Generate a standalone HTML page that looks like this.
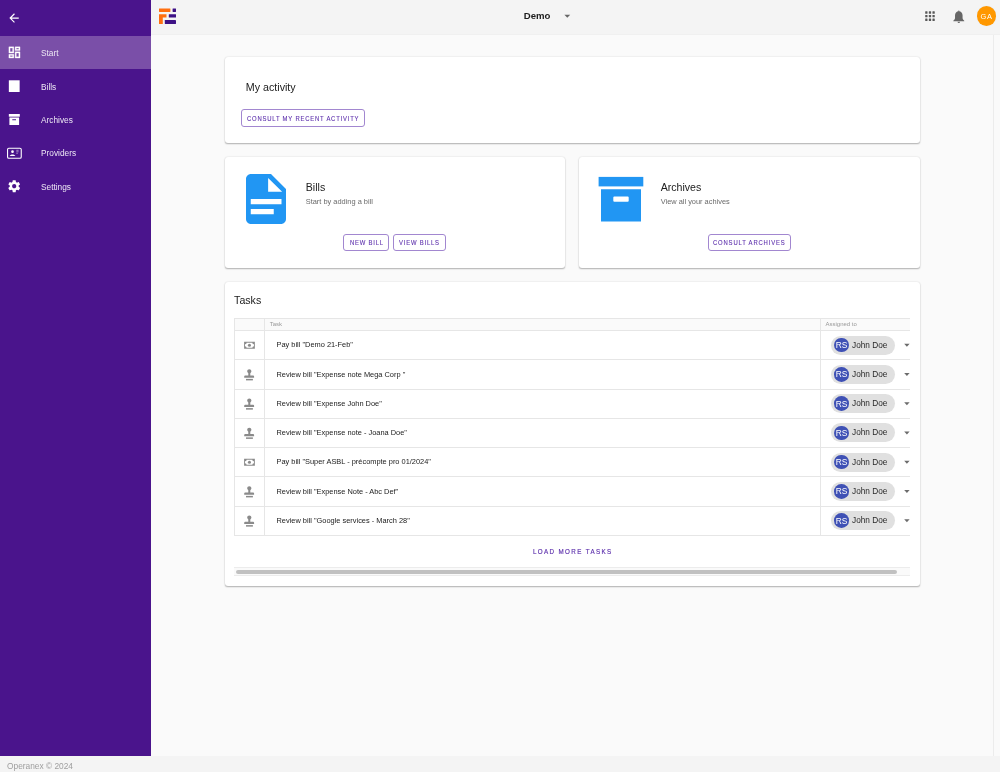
<!DOCTYPE html>
<html><head><meta charset="utf-8">
<style>
*{box-sizing:border-box;margin:0;padding:0}
html,body{width:1000px;height:772px;overflow:hidden;background:#fafafa;font-family:"Liberation Sans",sans-serif;color:#212121}
svg{position:absolute;overflow:visible}
.t{position:absolute;white-space:nowrap;line-height:1}
#side{position:absolute;left:0;top:0;width:150.5px;height:756px;background:#4a148c}
#side .active{position:absolute;left:0;top:35.5px;width:150.5px;height:33.7px;background:#7a4fa8}
#side .t{left:41px;font-size:8.3px;color:#ede7f4}
#hdr{position:absolute;left:150.5px;top:0;width:849.5px;height:35px;background:#f4f4f4;border-bottom:1px solid #f0f0f0}
#foot{position:absolute;left:0;top:756px;width:1000px;height:16px;background:#f4f4f4}
.card{position:absolute;background:#fff;border-radius:3px;box-shadow:0 1.3px 1.6px -0.4px rgba(0,0,0,.2),0 0.7px 1.6px 0 rgba(0,0,0,.1),0 0 2.5px rgba(0,0,0,.05)}
.btn{position:absolute;border:1.15px solid #a287d0;border-radius:3px}
.btxt{position:absolute;white-space:nowrap;line-height:1;color:#5f33ad;font-weight:normal;font-size:7.4px;letter-spacing:.65px;-webkit-text-stroke:.12px #5f33ad;transform-origin:0 0;transform:scaleX(.8)}
.title{font-size:10.6px;color:#212121}
.sub{font-size:7.42px;color:#6b6b6b}
.hl{position:absolute;height:1px;background:#e6e6e6}
.vl{position:absolute;width:1px;background:#e6e6e6}
.task{font-size:7.42px;color:#222}
.chip{position:absolute;left:830.6px;width:64.4px;height:19.2px;border-radius:9.6px;background:#e0e0e0}
.av{position:absolute;left:834px;width:14.6px;height:14.6px;border-radius:50%;background:#3f51b5}
.avt{font-size:8.4px;color:#fff}
.jd{font-size:8.27px;color:#2a2a2a}
</style></head><body>
<div id="root" style="position:absolute;left:0;top:0;width:1000px;height:772px;background:#fafafa;will-change:transform">

<div id="side">
  <svg style="left:7.25px;top:11.45px" width="14.1" height="14.1" viewBox="0 0 24 24"><path d="M20 11H7.83l5.59-5.59L12 4l-8 8 8 8 1.41-1.41L7.83 13H20v-2z" fill="#fff"/></svg>
  <div class="active"></div>
  <!-- dashboard -->
  <svg style="left:6.83px;top:44.93px" width="14.93" height="14.93" viewBox="0 0 24 24"><path fill="#fff" stroke="#fff" stroke-width=".45" d="M19 5v2h-4V5h4M9 5v6H5V5h4m10 8v6h-4v-6h4M9 17v2H5v-2h4M21 3h-8v6h8V3zM11 3H3v10h8V3zm10 8h-8v10h8V11zm-10 4H3v6h8v-6z"/></svg>
  <div class="t" style="top:49px">Start</div>
  <!-- bills -->
  <svg style="left:0;top:0" width="151" height="200"><rect x="8.84" y="80.3" width="10.8" height="11.7" fill="#fff"/></svg>
  <div class="t" style="top:82.5px">Bills</div>
  <!-- archives -->
  <svg style="left:0;top:0" width="151" height="200"><rect x="8.84" y="114" width="10.96" height="2.7" fill="#fff"/><path fill="#fff" fill-rule="evenodd" d="M9.4 117.4h9.7v7.7h-9.7z M12.3 119.25h3.7v1h-3.7z"/></svg>
  <div class="t" style="top:115.8px">Archives</div>
  <!-- providers -->
  <svg style="left:0;top:0" width="151" height="200"><rect x="7.55" y="148.25" width="13.7" height="10" rx="1.3" fill="none" stroke="#fff" stroke-width="1.1"/><circle cx="12.5" cy="151.7" r="1.35" fill="#fff"/><path d="M9.6 156.1c0.4-1.2 1.6-1.7 2.9-1.7s2.5 0.5 2.9 1.7z" fill="#fff"/><path d="M16.3 150.3h2.3M16.3 151.8h2.3M16.3 153.3h1.5" stroke="#fff" stroke-opacity=".55" stroke-width=".9"/></svg>
  <div class="t" style="top:148.9px">Providers</div>
  <!-- settings -->
  <svg style="left:7.1px;top:179.3px" width="14.4" height="14.4" viewBox="0 0 24 24"><path fill="#fff" d="M19.43 12.98c.04-.32.07-.64.07-.98s-.03-.66-.07-.98l2.11-1.650c.19-.15.24-.42.12-.64l-2-3.46c-.12-.22-.39-.3-.61-.22l-2.49 1c-.52-.4-1.08-.73-1.69-.98l-.38-2.65C14.46 2.18 14.25 2 14 2h-4c-.25 0-.46.18-.49.42l-.38 2.65c-.61.25-1.170.59-1.69.98l-2.49-1c-.23-.09-.49 0-.61.22l-2 3.46c-.13.22-.07.49.12.64l2.11 1.65c-.04.32-.07.65-.07.98s.03.66.07.98l-2.11 1.65c-.19.15-.24.42-.12.64l2 3.46c.12.22.39.3.61.22l2.49-1c.52.4 1.08.73 1.69.98l.38 2.65c.03.24.24.42.49.42h4c.25 0 .46-.18.49-.42l.38-2.65c.61-.25 1.17-.59 1.69-.98l2.49 1c.23.09.49 0 .61-.22l2-3.46c.12-.22.07-.49-.12-.64l-2.11-1.65zM12 15.5c-1.93 0-3.5-1.57-3.5-3.5s1.57-3.5 3.5-3.5 3.5 1.57 3.5 3.5-1.57 3.5-3.5 3.5z"/></svg>
  <div class="t" style="top:182.5px">Settings</div>
</div>

<div id="hdr"></div>
<!-- logo -->
<svg style="left:0;top:0" width="200" height="30">
  <rect x="159" y="8.4" width="11.4" height="3.6" rx=".4" fill="#ff6f0f"/>
  <rect x="172.6" y="8.4" width="3.4" height="3.6" rx=".4" fill="#3d1185"/>
  <path d="M159 14.2h7.5v3.4h-3.7v6.4h-3.8z" fill="#ff6f0f"/>
  <rect x="168.8" y="14.2" width="7.2" height="3.4" rx=".4" fill="#3d1185"/>
  <rect x="164.8" y="20" width="11.2" height="4" rx=".4" fill="#3d1185"/>
</svg>
<div class="t" style="left:523.8px;top:10.9px;font-size:9.6px;font-weight:bold;color:#1d1d1d">Demo</div>
<svg style="left:0;top:0" width="1000" height="30">
  <path d="M564.4 14.7h5.8l-2.9 3z" fill="#666"/>
  <g fill="#585858"><rect x="925.20" y="11.33" width="2.3" height="2.3" rx=".5"/><rect x="928.83" y="11.33" width="2.3" height="2.3" rx=".5"/><rect x="932.46" y="11.33" width="2.3" height="2.3" rx=".5"/><rect x="925.20" y="14.96" width="2.3" height="2.3" rx=".5"/><rect x="928.83" y="14.96" width="2.3" height="2.3" rx=".5"/><rect x="932.46" y="14.96" width="2.3" height="2.3" rx=".5"/><rect x="925.20" y="18.59" width="2.3" height="2.3" rx=".5"/><rect x="928.83" y="18.59" width="2.3" height="2.3" rx=".5"/><rect x="932.46" y="18.59" width="2.3" height="2.3" rx=".5"/></g>
</svg>
<svg style="left:950.8px;top:8.5px" width="15.6" height="15.6" viewBox="0 0 24 24"><g fill="#666"><circle cx="12" cy="3.3" r="1.1"/><path d="M12 3.4C8.4 3.4 6.2 6.1 6.2 9.8V13.5C6.2 15.6 5.1 16.9 3.6 17.9V18.9H20.4V17.9C18.9 16.9 17.8 15.6 17.8 13.5V9.8C17.8 6.1 15.6 3.4 12 3.4Z"/><path d="M10.1 19.6H13.9A1.9 1.9 0 0 1 10.1 19.6Z"/></g></svg>
<div style="position:absolute;left:976.6px;top:6.4px;width:19.4px;height:19.4px;border-radius:50%;background:#ff9800;box-shadow:0 0 0 1px #eef3f8"></div>
<div class="t" style="left:980.6px;top:12.5px;font-size:7.4px;color:#fff;letter-spacing:.6px">GA</div>

<!-- scrollbar edge -->
<div style="position:absolute;left:992.5px;top:35px;width:1px;height:721px;background:#ececec"></div>

<div id="foot"><div class="t" style="left:7px;top:5.5px;font-size:8.35px;color:#9e9e9e">Operanex © 2024</div></div>

<!-- card 1 -->
<div class="card" style="left:224.5px;top:56.7px;width:695.7px;height:86.3px"></div>
<div class="t title" style="left:245.8px;top:81.8px;font-size:10.7px">My activity</div>
<div class="btn" style="left:241.2px;top:109.1px;width:123.6px;height:17.8px"></div>
<div class="btxt" style="left:247.3px;top:114.9px;letter-spacing:.98px">CONSULT MY RECENT ACTIVITY</div>

<!-- card 2 -->
<div class="card" style="left:224.5px;top:157.3px;width:340.5px;height:110.3px"></div>
<svg style="left:236px;top:169px" width="60" height="60" viewBox="0 0 24 24"><path fill="#2196f3" fill-rule="evenodd" d="M6 2h8l6 6v12c0 1.1-.9 2-2 2H6c-1.1 0-2-.9-2-2V4c0-1.1.9-2 2-2z M12.85 3.6v5.5h5.6z M5.9 12h12.3v2.05H5.9z M5.9 16h9.2v2.05H5.9z"/></svg>
<div class="t title" style="left:305.75px;top:182.3px">Bills</div>
<div class="t sub" style="left:305.75px;top:197.9px">Start by adding a bill</div>
<div class="btn" style="left:343.25px;top:233.9px;width:45.5px;height:17.1px"></div>
<div class="btxt" style="left:349.7px;top:239.4px;letter-spacing:.96px">NEW BILL</div>
<div class="btn" style="left:393.25px;top:233.9px;width:52.5px;height:17.1px"></div>
<div class="btxt" style="left:399.3px;top:239.4px;letter-spacing:.99px">VIEW BILLS</div>

<!-- card 3 -->
<div class="card" style="left:579px;top:157.3px;width:341.2px;height:110.3px"></div>
<svg style="left:0;top:0" width="1000" height="300">
  <rect x="598.6" y="176.9" width="44.7" height="9.5" fill="#2196f3"/>
  <path fill="#2196f3" fill-rule="evenodd" d="M601 189.2h40v32.3h-40z M614.3 196.4h13.4a1 1 0 0 1 1 1v3.3a1 1 0 0 1-1 1h-13.4a1 1 0 0 1-1-1v-3.3a1 1 0 0 1 1-1z"/>
</svg>
<div class="t title" style="left:660.7px;top:182.4px">Archives</div>
<div class="t sub" style="left:660.7px;top:197.6px">View all your achives</div>
<div class="btn" style="left:707.5px;top:233.9px;width:83.2px;height:17.1px"></div>
<div class="btxt" style="left:713.2px;top:239.3px;letter-spacing:1.03px">CONSULT ARCHIVES</div>

<!-- card 4 tasks -->
<div class="card" style="left:224.5px;top:282.2px;width:695.7px;height:304.2px"></div>
<div class="t title" style="left:234.1px;top:294.6px">Tasks</div>

<div style="position:absolute;left:234.3px;top:318.4px;width:675.8px;height:12.1px;background:#fafafa"></div>
<div class="t" style="left:269.7px;top:322.4px;font-size:5.97px;color:#999">Task</div>
<div class="t" style="left:825.6px;top:322.4px;font-size:5.97px;color:#999">Assigned to</div>
<!--ROWS-->
<div class="hl" style="left:234.3px;top:318px;width:675.8px"></div>
<div class="hl" style="left:234.3px;top:330.00px;width:675.8px"></div>
<div class="hl" style="left:234.3px;top:359.25px;width:675.8px"></div>
<div class="hl" style="left:234.3px;top:388.50px;width:675.8px"></div>
<div class="hl" style="left:234.3px;top:417.75px;width:675.8px"></div>
<div class="hl" style="left:234.3px;top:447.00px;width:675.8px"></div>
<div class="hl" style="left:234.3px;top:476.25px;width:675.8px"></div>
<div class="hl" style="left:234.3px;top:505.50px;width:675.8px"></div>
<div class="hl" style="left:234.3px;top:534.75px;width:675.8px"></div>
<div class="vl" style="left:234.0px;top:318px;height:217.25px"></div>
<div class="vl" style="left:264.0px;top:318px;height:217.25px"></div>
<div class="vl" style="left:820.0px;top:318px;height:217.25px"></div>
<svg style="left:0;top:0" width="1000" height="600"><g transform="translate(0,345.12)"><path fill-rule="evenodd" fill="#8a8a8a" d="M244.1 -3.3h10.75v6.9h-10.75z M246.6 -2.4h5.75a1.6 1.6 0 0 0 1.6 1.6v1.9a1.6 1.6 0 0 0-1.6 1.6h-5.75a1.6 1.6 0 0 0-1.6-1.6v-1.9a1.6 1.6 0 0 0 1.6-1.6z"/><circle cx="249.45" cy="0.15" r="1.55" fill="#8a8a8a"/></g></svg>
<div class="t task" style="left:276.5px;top:341.32px">Pay bill "Demo 21-Feb"</div>
<div class="chip" style="top:335.52px"></div>
<div class="av" style="top:337.82px"></div>
<div class="t avt" style="left:835.7px;top:341.02px">RS</div>
<div class="t jd" style="left:852px;top:341.73px">John Doe</div>
<svg style="left:0;top:0" width="1000" height="600"><path d="M904.2 343.82h5.4l-2.7 3z" fill="#6b6b6b"/></svg>
<svg style="left:0;top:0" width="1000" height="600"><g transform="translate(0,374.38)" fill="#8a8a8a"><path d="M249.3 -5.1C250.5 -5.1 251.4 -4.2 251.4 -3.1C251.4 -2.2 250.9 -1.7 250.3 -1.2L250.3 1.2L253.1 1.2Q254.1 1.2 254.1 2.2L254.1 3.3L244.2 3.3L244.2 2.2Q244.2 1.2 245.2 1.2L248.3 1.2L248.3 -1.2C247.7 -1.7 247.2 -2.2 247.2 -3.1C247.2 -4.2 248.1 -5.1 249.3 -5.1Z"/><rect x="246" y="4.5" width="6.9" height="1.5"/></g></svg>
<div class="t task" style="left:276.5px;top:370.57px">Review bill "Expense note Mega Corp "</div>
<div class="chip" style="top:364.77px"></div>
<div class="av" style="top:367.07px"></div>
<div class="t avt" style="left:835.7px;top:370.27px">RS</div>
<div class="t jd" style="left:852px;top:370.98px">John Doe</div>
<svg style="left:0;top:0" width="1000" height="600"><path d="M904.2 373.07h5.4l-2.7 3z" fill="#6b6b6b"/></svg>
<svg style="left:0;top:0" width="1000" height="600"><g transform="translate(0,403.62)" fill="#8a8a8a"><path d="M249.3 -5.1C250.5 -5.1 251.4 -4.2 251.4 -3.1C251.4 -2.2 250.9 -1.7 250.3 -1.2L250.3 1.2L253.1 1.2Q254.1 1.2 254.1 2.2L254.1 3.3L244.2 3.3L244.2 2.2Q244.2 1.2 245.2 1.2L248.3 1.2L248.3 -1.2C247.7 -1.7 247.2 -2.2 247.2 -3.1C247.2 -4.2 248.1 -5.1 249.3 -5.1Z"/><rect x="246" y="4.5" width="6.9" height="1.5"/></g></svg>
<div class="t task" style="left:276.5px;top:399.82px">Review bill "Expense John Doe"</div>
<div class="chip" style="top:394.02px"></div>
<div class="av" style="top:396.32px"></div>
<div class="t avt" style="left:835.7px;top:399.52px">RS</div>
<div class="t jd" style="left:852px;top:400.23px">John Doe</div>
<svg style="left:0;top:0" width="1000" height="600"><path d="M904.2 402.32h5.4l-2.7 3z" fill="#6b6b6b"/></svg>
<svg style="left:0;top:0" width="1000" height="600"><g transform="translate(0,432.88)" fill="#8a8a8a"><path d="M249.3 -5.1C250.5 -5.1 251.4 -4.2 251.4 -3.1C251.4 -2.2 250.9 -1.7 250.3 -1.2L250.3 1.2L253.1 1.2Q254.1 1.2 254.1 2.2L254.1 3.3L244.2 3.3L244.2 2.2Q244.2 1.2 245.2 1.2L248.3 1.2L248.3 -1.2C247.7 -1.7 247.2 -2.2 247.2 -3.1C247.2 -4.2 248.1 -5.1 249.3 -5.1Z"/><rect x="246" y="4.5" width="6.9" height="1.5"/></g></svg>
<div class="t task" style="left:276.5px;top:429.07px">Review bill "Expense note - Joana Doe"</div>
<div class="chip" style="top:423.27px"></div>
<div class="av" style="top:425.57px"></div>
<div class="t avt" style="left:835.7px;top:428.77px">RS</div>
<div class="t jd" style="left:852px;top:429.48px">John Doe</div>
<svg style="left:0;top:0" width="1000" height="600"><path d="M904.2 431.57h5.4l-2.7 3z" fill="#6b6b6b"/></svg>
<svg style="left:0;top:0" width="1000" height="600"><g transform="translate(0,462.12)"><path fill-rule="evenodd" fill="#8a8a8a" d="M244.1 -3.3h10.75v6.9h-10.75z M246.6 -2.4h5.75a1.6 1.6 0 0 0 1.6 1.6v1.9a1.6 1.6 0 0 0-1.6 1.6h-5.75a1.6 1.6 0 0 0-1.6-1.6v-1.9a1.6 1.6 0 0 0 1.6-1.6z"/><circle cx="249.45" cy="0.15" r="1.55" fill="#8a8a8a"/></g></svg>
<div class="t task" style="left:276.5px;top:458.32px">Pay bill "Super ASBL - précompte pro 01/2024"</div>
<div class="chip" style="top:452.52px"></div>
<div class="av" style="top:454.82px"></div>
<div class="t avt" style="left:835.7px;top:458.02px">RS</div>
<div class="t jd" style="left:852px;top:458.73px">John Doe</div>
<svg style="left:0;top:0" width="1000" height="600"><path d="M904.2 460.82h5.4l-2.7 3z" fill="#6b6b6b"/></svg>
<svg style="left:0;top:0" width="1000" height="600"><g transform="translate(0,491.38)" fill="#8a8a8a"><path d="M249.3 -5.1C250.5 -5.1 251.4 -4.2 251.4 -3.1C251.4 -2.2 250.9 -1.7 250.3 -1.2L250.3 1.2L253.1 1.2Q254.1 1.2 254.1 2.2L254.1 3.3L244.2 3.3L244.2 2.2Q244.2 1.2 245.2 1.2L248.3 1.2L248.3 -1.2C247.7 -1.7 247.2 -2.2 247.2 -3.1C247.2 -4.2 248.1 -5.1 249.3 -5.1Z"/><rect x="246" y="4.5" width="6.9" height="1.5"/></g></svg>
<div class="t task" style="left:276.5px;top:487.57px">Review bill "Expense Note - Abc Def"</div>
<div class="chip" style="top:481.77px"></div>
<div class="av" style="top:484.07px"></div>
<div class="t avt" style="left:835.7px;top:487.27px">RS</div>
<div class="t jd" style="left:852px;top:487.98px">John Doe</div>
<svg style="left:0;top:0" width="1000" height="600"><path d="M904.2 490.07h5.4l-2.7 3z" fill="#6b6b6b"/></svg>
<svg style="left:0;top:0" width="1000" height="600"><g transform="translate(0,520.62)" fill="#8a8a8a"><path d="M249.3 -5.1C250.5 -5.1 251.4 -4.2 251.4 -3.1C251.4 -2.2 250.9 -1.7 250.3 -1.2L250.3 1.2L253.1 1.2Q254.1 1.2 254.1 2.2L254.1 3.3L244.2 3.3L244.2 2.2Q244.2 1.2 245.2 1.2L248.3 1.2L248.3 -1.2C247.7 -1.7 247.2 -2.2 247.2 -3.1C247.2 -4.2 248.1 -5.1 249.3 -5.1Z"/><rect x="246" y="4.5" width="6.9" height="1.5"/></g></svg>
<div class="t task" style="left:276.5px;top:516.83px">Review bill "Google services - March 28"</div>
<div class="chip" style="top:511.02px"></div>
<div class="av" style="top:513.33px"></div>
<div class="t avt" style="left:835.7px;top:516.52px">RS</div>
<div class="t jd" style="left:852px;top:517.23px">John Doe</div>
<svg style="left:0;top:0" width="1000" height="600"><path d="M904.2 519.33h5.4l-2.7 3z" fill="#6b6b6b"/></svg>
<div class="btxt" style="left:532.7px;top:547.5px;font-size:7.8px;letter-spacing:1.71px;-webkit-text-stroke:.2px #5f33ad">LOAD MORE TASKS</div>
<div style="position:absolute;left:234.3px;top:567px;width:675.8px;height:8.6px;background:#fafafa;border-top:1px solid #ececec;border-bottom:1px solid #ececec"></div>
<div style="position:absolute;left:235.9px;top:569.7px;width:660.8px;height:4.2px;border-radius:2.1px;background:#c1c1c1"></div>
<!--/ROWS-->
</div>
</body></html>
